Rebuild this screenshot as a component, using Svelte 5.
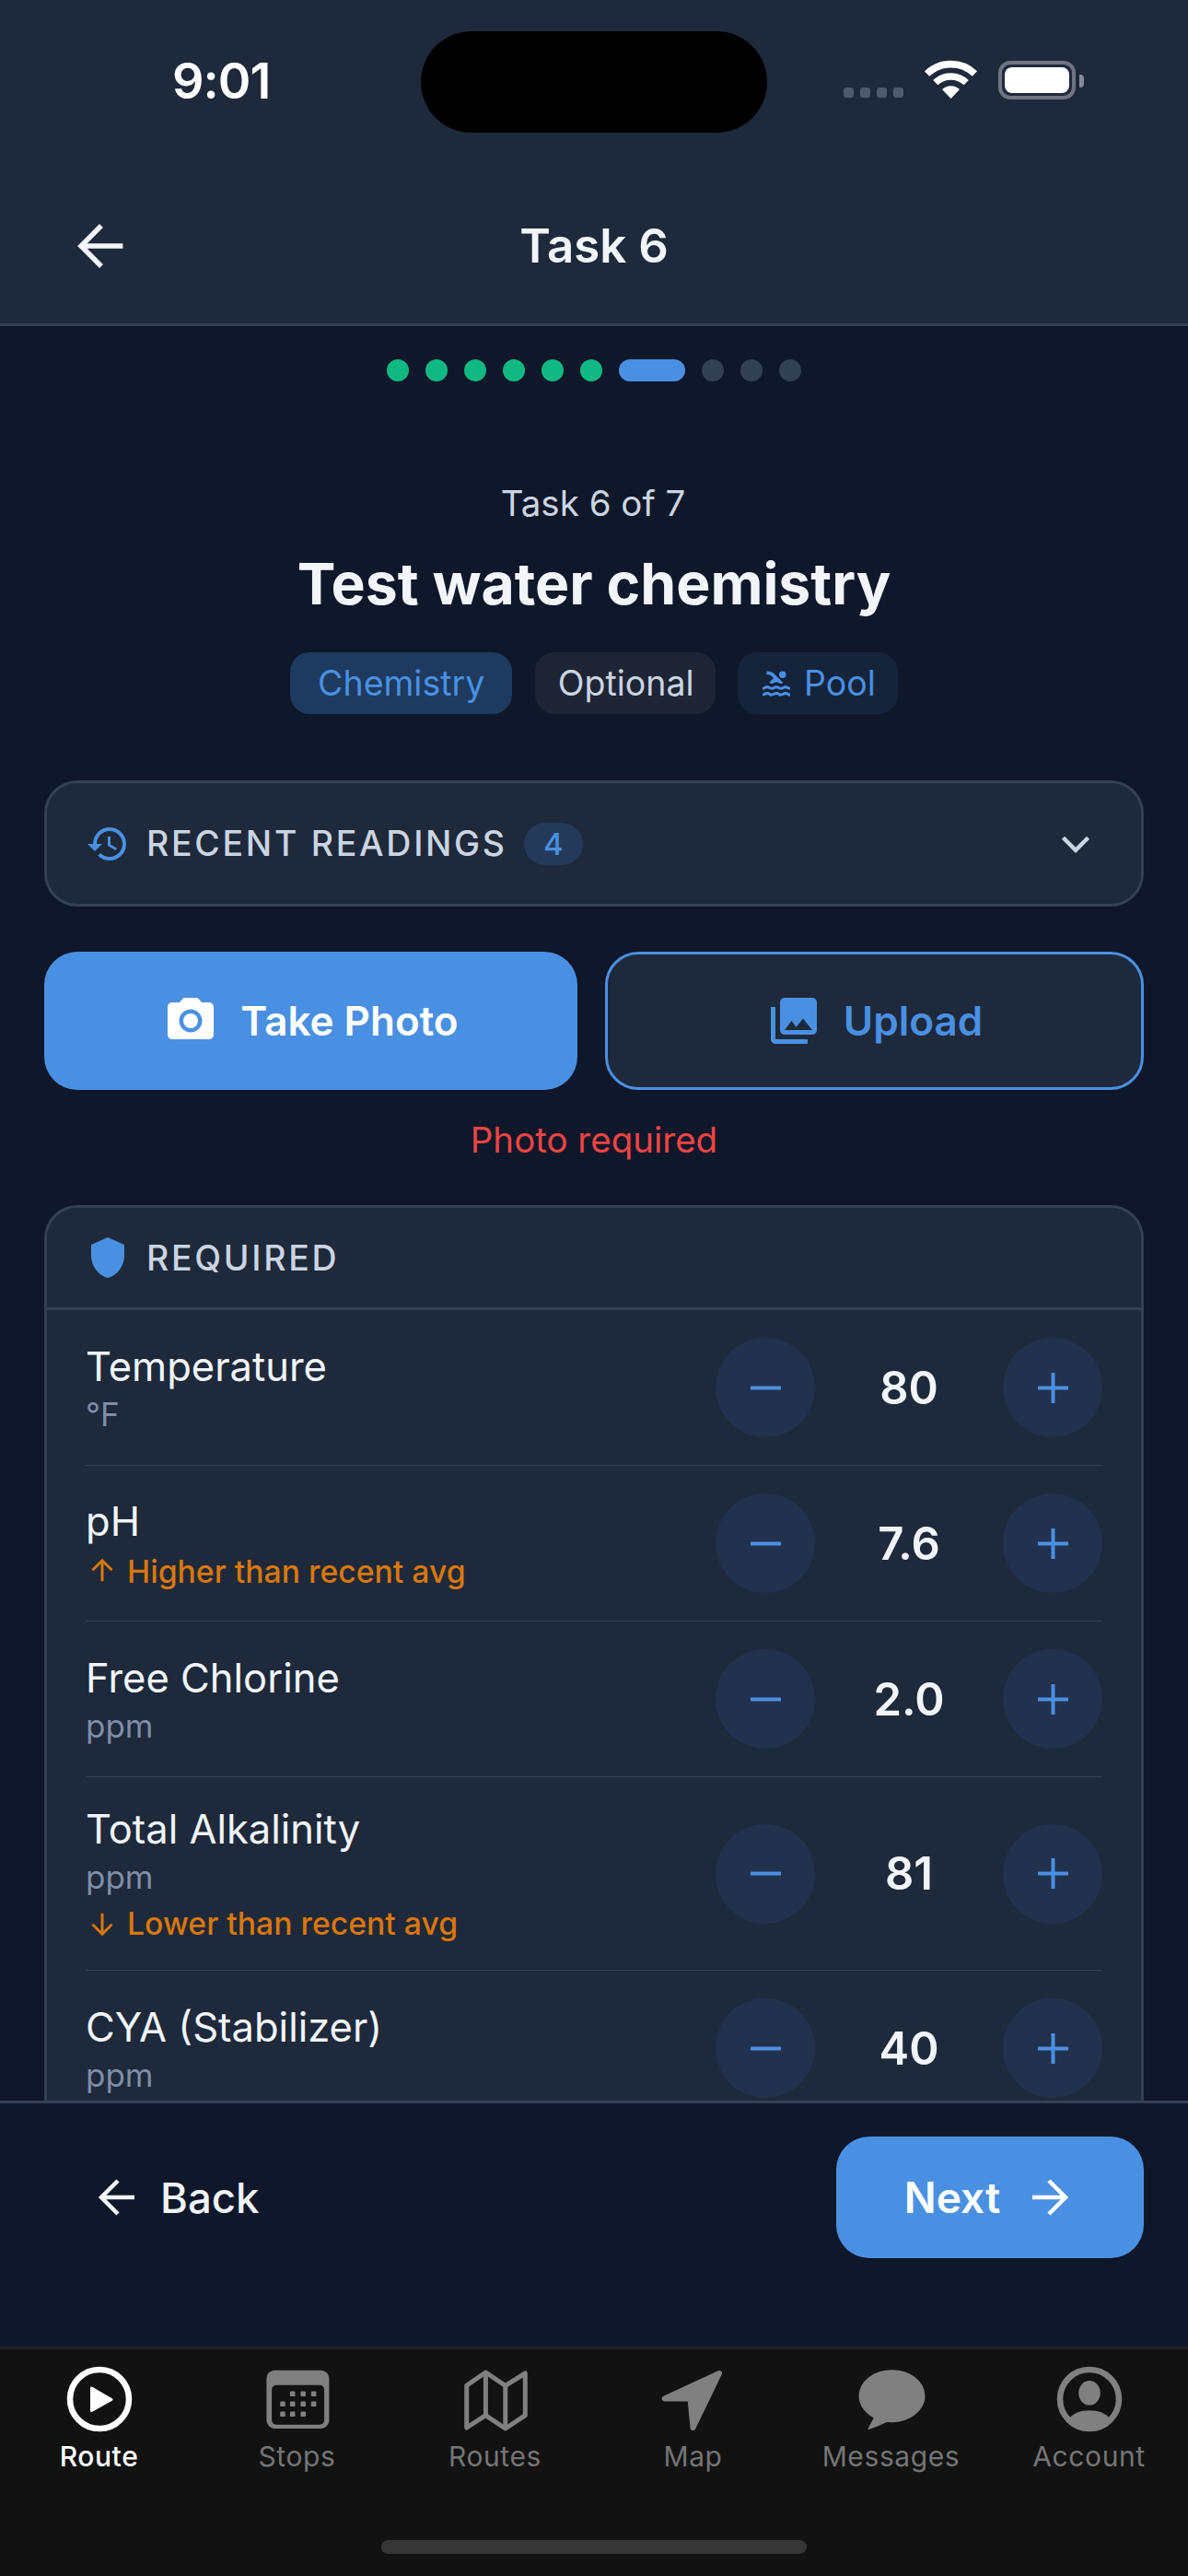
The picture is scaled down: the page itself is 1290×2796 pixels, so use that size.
<script>
  const dots = ['done','done','done','done','done','done','active','todo','todo','todo'];
  const rows = [
    { label: 'Temperature', unit: '°F', value: '80' },
    { label: 'pH', warn: 'up', value: '7.6' },
    { label: 'Free Chlorine', unit: 'ppm', value: '2.0' },
    { label: 'Total Alkalinity', unit: 'ppm', warn: 'down', value: '81' },
    { label: 'CYA (Stabilizer)', unit: 'ppm', value: '40' }
  ];
  const tabs = ['Route','Stops','Routes','Map','Messages','Account'];
  const stopDots = [[34.7,32.3],[46.2,32.3],[57.6,32.3],[24,43.3],[34.7,43.3],[46.2,43.3],[57.6,43.3],[24,54.3],[34.7,54.3],[46.2,54.3]];
</script>

<div class="phone">
  <header class="top">
    <div class="status">
      <span class="time">9:01</span>
      <div class="island"></div>
      <div class="sys">
        <div class="signal"><i></i><i></i><i></i><i></i></div>
        <svg class="wifi" width="58" height="43" viewBox="0 0 58 43" fill="none">
          <path d="M2.6 15.1A37.3 37.3 0 0 1 54.4 15.1" stroke="#fff" stroke-width="7.6"/>
          <path d="M11.8 24.7A24 24 0 0 1 45.2 24.7" stroke="#fff" stroke-width="7.4"/>
          <path d="M28.5 42L19 32.1A13.7 13.7 0 0 1 38 32.1Z" fill="#fff"/>
        </svg>
        <div class="battery"><div class="cell"></div><div class="nub"></div></div>
      </div>
    </div>
    <div class="nav">
      <svg class="navback" width="66" height="66" viewBox="0 0 24 24" fill="none" stroke="#f1f5f9" stroke-width="2"><path d="M20.5 12H4M12 4l-8 8 8 8"/></svg>
      <h1 class="navtitle">Task 6</h1>
    </div>
  </header>

  <main class="scroll">
    <div class="progress">
      {#each dots as d}<span class="dot {d}"></span>{/each}
    </div>

    <p class="count">Task 6 of 7</p>
    <h2 class="title">Test water chemistry</h2>
    <div class="chips">
      <span class="chip c-blue">Chemistry</span>
      <span class="chip c-grey">Optional</span>
      <span class="chip c-pool">
        <svg width="36" height="36" viewBox="0 0 24 24" fill="#4a90e2"><path d="M22 21c-1.11 0-1.73-.37-2.18-.64-.37-.22-.6-.36-1.15-.36-.56 0-.78.13-1.15.36-.46.27-1.07.64-2.18.64s-1.73-.37-2.18-.64c-.37-.22-.6-.36-1.15-.36-.56 0-.78.13-1.15.36-.46.27-1.08.64-2.19.64-1.11 0-1.73-.37-2.18-.64-.37-.23-.6-.36-1.15-.36s-.78.13-1.15.36c-.46.27-1.08.64-2.19.64v-2c.56 0 .78-.13 1.15-.36.46-.27 1.08-.64 2.19-.64s1.73.37 2.18.64c.37.23.59.36 1.15.36.56 0 .78-.13 1.15-.36.46-.27 1.08-.64 2.19-.64 1.11 0 1.73.37 2.18.64.37.22.6.36 1.15.36s.78-.13 1.15-.36c.45-.27 1.07-.64 2.18-.64s1.73.37 2.18.64c.37.23.59.36 1.15.36v2zm0-4.5c-1.11 0-1.73-.37-2.18-.64-.37-.22-.6-.36-1.15-.36-.56 0-.78.13-1.15.36-.45.27-1.07.64-2.18.64s-1.73-.37-2.18-.64c-.37-.22-.6-.36-1.15-.36-.56 0-.78.13-1.15.36-.45.27-1.07.64-2.18.64s-1.73-.37-2.18-.64c-.37-.22-.6-.36-1.15-.36s-.78.13-1.15.36c-.47.27-1.09.64-2.2.64v-2c.56 0 .78-.13 1.15-.36.45-.27 1.07-.64 2.18-.64s1.73.37 2.18.64c.37.22.6.36 1.15.36.56 0 .78-.13 1.15-.36.45-.27 1.07-.64 2.18-.64s1.73.37 2.18.64c.37.22.6.36 1.15.36s.78-.13 1.15-.36c.45-.27 1.07-.64 2.18-.64s1.73.37 2.18.64c.37.22.6.36 1.15.36v2zM8.67 12c.56 0 .78-.13 1.15-.36.46-.27 1.08-.64 2.19-.64 1.11 0 1.73.37 2.18.64.37.22.6.36 1.15.36s.78-.13 1.15-.36c.12-.07.26-.15.41-.23L10.48 5C8.93 3.45 7.5 2.99 5 3v2.5c1.82-.01 2.89.39 4 1.5l1 1-3.25 3.25c.31.12.56.27.77.39.37.23.59.36 1.15.36z"/><circle cx="16.5" cy="5.5" r="2.5"/></svg>
        Pool
      </span>
    </div>

    <section class="recent">
      <svg width="48" height="48" viewBox="0 0 24 24" fill="#4a90e2"><path d="M13 3a9 9 0 0 0-9 9H1l3.89 3.89.07.14L9 12H6c0-3.87 3.13-7 7-7s7 3.13 7 7-3.13 7-7 7c-1.93 0-3.68-.79-4.94-2.06l-1.42 1.42A8.954 8.954 0 0 0 13 21a9 9 0 0 0 0-18zm-1 5v5l4.28 2.54.72-1.21-3.5-2.08V8H12z"/></svg>
      <span class="caps">RECENT READINGS</span>
      <span class="badge">4</span>
      <svg class="chev" width="54" height="54" viewBox="0 0 24 24" fill="none" stroke="#cbd5e1" stroke-width="2"><path d="M6 9l6 6 6-6"/></svg>
    </section>

    <div class="actions">
      <button class="act primary">
        <svg width="60" height="60" viewBox="0 0 24 24" fill="#fff"><path d="M9 2L7.17 4H4c-1.1 0-2 .9-2 2v12c0 1.1.9 2 2 2h16c1.1 0 2-.9 2-2V6c0-1.1-.9-2-2-2h-3.17L15 2H9zm3 15c-2.76 0-5-2.24-5-5s2.24-5 5-5 5 2.24 5 5-2.24 5-5 5z"/><circle cx="12" cy="12" r="3.2"/></svg>
        Take Photo
      </button>
      <button class="act outline">
        <svg width="60" height="60" viewBox="0 0 24 24" fill="#4a90e2"><path d="M22 16V4c0-1.1-.9-2-2-2H8c-1.1 0-2 .9-2 2v12c0 1.1.9 2 2 2h12c1.1 0 2-.9 2-2zm-11-4l2.03 2.71L16 11l4 5H8l3-4zM2 6v14c0 1.1.9 2 2 2h14v-2H4V6H2z"/></svg>
        Upload
      </button>
    </div>
    <p class="err">Photo required</p>

    <section class="card">
      <div class="cardhead">
        <svg width="48" height="48" viewBox="0 0 24 24" fill="#4a90e2"><path d="M12 1L3 5v6c0 5.55 3.84 10.74 9 12 5.16-1.26 9-6.45 9-12V5l-9-4z"/></svg>
        <span class="caps">REQUIRED</span>
      </div>
      <div class="rows">
        {#each rows as r}
          <div class="row">
            <div class="info">
              <div class="label">{r.label}</div>
              {#if r.unit}<div class="unit">{r.unit}</div>{/if}
              {#if r.warn === 'up'}
                <div class="warn">
                  <svg width="36" height="36" viewBox="0 0 24 24" fill="none" stroke="#d97706" stroke-width="2"><path d="M12 19.5V4.5M5 11.5l7-7 7 7"/></svg>
                  Higher than recent avg
                </div>
              {:else if r.warn === 'down'}
                <div class="warn">
                  <svg width="36" height="36" viewBox="0 0 24 24" fill="none" stroke="#d97706" stroke-width="2"><path d="M12 4.5v15M5 12.5l7 7 7-7"/></svg>
                  Lower than recent avg
                </div>
              {/if}
            </div>
            <div class="stepper">
              <button class="round" aria-label="Decrease">
                <svg width="33" height="33" viewBox="0 0 33 33" stroke="#4a90e2" stroke-width="4"><path d="M0 16.5H33"/></svg>
              </button>
              <span class="value">{r.value}</span>
              <button class="round" aria-label="Increase">
                <svg width="33" height="33" viewBox="0 0 33 33" stroke="#4a90e2" stroke-width="4"><path d="M0 16.5H33M16.5 0V33"/></svg>
              </button>
            </div>
          </div>
        {/each}
      </div>
    </section>
  </main>

  <footer class="foot">
    <button class="back">
      <svg width="54" height="54" viewBox="0 0 24 24" fill="none" stroke="#f1f5f9" stroke-width="2"><path d="M20 12H4M12 4l-8 8 8 8"/></svg>
      Back
    </button>
    <button class="next">
      Next
      <svg width="54" height="54" viewBox="0 0 24 24" fill="none" stroke="#fff" stroke-width="2"><path d="M4 12h16M12 4l8 8-8 8"/></svg>
    </button>
  </footer>

  <nav class="tabs">
    {#each tabs as t, i}
      <div class="tab" class:on={i === 0}>
        <svg width="80" height="76" viewBox="0 0 80 76">
          {#if i === 0}
            <circle cx="40" cy="38" r="32" fill="none" stroke="#fff" stroke-width="6.5"/>
            <path d="M31.5 26V50.5L53 38.5Z" fill="#fff" stroke="#fff" stroke-width="3" stroke-linejoin="round"/>
          {:else if i === 1}
            <rect x="6.4" y="6.7" width="68" height="63.3" rx="9" fill="#808080"/>
            <rect x="12.1" y="22.7" width="57" height="43" rx="5" fill="#121212"/>
            {#each stopDots as p}
              <rect x={p[0]-2.8} y={p[1]-2.8} width="5.6" height="5.6" rx="1.2" fill="#808080"/>
            {/each}
          {:else if i === 2}
            <path d="M8.7 23.3L29.4 9L50.8 23.3L72.3 10V55.7L50.8 70L29.4 55.7L8.7 69Z" fill="none" stroke="#808080" stroke-width="5" stroke-linejoin="round"/>
            <path d="M29.4 9V55.7M50.8 23.3V70" fill="none" stroke="#808080" stroke-width="5"/>
          {:else if i === 3}
            <path d="M68 10L8.7 37.5H36.5L39.5 69Z" fill="#808080" stroke="#808080" stroke-width="6" stroke-linejoin="round"/>
          {:else if i === 4}
            <ellipse cx="40.5" cy="34.7" rx="36" ry="28.5" fill="#808080"/>
            <path d="M21.5 57L14.5 70Q15 71.5 17 70.5Q27 67 37 62Z" fill="#808080"/>
          {:else}
            <circle cx="40" cy="38" r="32" fill="none" stroke="#808080" stroke-width="6.5"/>
            <ellipse cx="40" cy="31.3" rx="11.8" ry="13.3" fill="#808080"/>
            <path d="M17.5 59.5C26 47 54 47 62.5 59.5A32 32 0 0 1 17.5 59.5Z" fill="#808080"/>
          {/if}
        </svg>
        <span>{t}</span>
      </div>
    {/each}
    <div class="home"></div>
  </nav>
</div>

<style>
  :global(body) { margin: 0; background: #0f172a; }
  * { box-sizing: border-box; }
  .phone {
    width: 1290px; height: 2796px; display: flex; flex-direction: column; overflow: hidden;
    background: #0f172a; color: #f1f5f9; font-family: Inter, "Liberation Sans", sans-serif;
  }
  button { font-family: inherit; border: 0; padding: 0; cursor: pointer; }
  p, h1, h2 { margin: 0; }

  .top { flex: none; height: 354px; background: #1e293b; border-bottom: 3px solid #334155; }
  .status { position: relative; height: 183px; display: flex; align-items: flex-start; padding: 65px 113px 0 187px; }
  .time { font-size: 54px; font-weight: 600; color: #fff; line-height: 46px; letter-spacing: -1px; }
  .island { position: absolute; left: 457px; top: 34px; width: 376px; height: 110px; border-radius: 55px; background: #000; }
  .sys { margin-left: auto; display: flex; align-items: flex-end; height: 43px; }
  .signal { display: flex; gap: 7px; margin-bottom: 2px; }
  .signal i { width: 11px; height: 11px; border-radius: 3px; background: #4f5b6c; }
  .wifi { margin-left: 23px; display: block; }
  .battery { position: relative; width: 84px; height: 42px; margin: 0 9px 0 22px; border: 4px solid #6d7580; border-radius: 13px; padding: 3px; }
  .cell { width: 100%; height: 100%; background: #fff; border-radius: 8px; }
  .nub { position: absolute; right: -13px; top: 11px; width: 5px; height: 14px; background: #858c96; border-radius: 0 4px 4px 0; }

  .nav { position: relative; height: 168px; display: flex; align-items: center; justify-content: center; }
  .navback { position: absolute; left: 77px; top: 51px; }
  .navtitle { font-size: 51px; font-weight: 600; line-height: 66px; color: #f1f5f9; }

  .scroll { flex: 1; min-height: 0; overflow: hidden; padding: 36px 48px 0; }
  .progress { display: flex; justify-content: center; gap: 18px; }
  .dot { width: 24px; height: 24px; border-radius: 12px; background: #334155; }
  .dot.done { background: #10b981; }
  .dot.active { width: 72px; background: #4a90e2; }

  .count { margin-top: 109px; text-align: center; font-size: 38.5px; line-height: 47px; color: #cbd5e1; padding-right: 2px; }
  .title { margin-top: 25px; text-align: center; font-size: 62.5px; font-weight: 700; line-height: 76px; color: #f1f5f9; }
  .chips { margin-top: 37px; display: flex; justify-content: center; gap: 24.5px; }
  .chip { height: 67px; padding: 0 30px; border-radius: 21px; display: flex; align-items: center; gap: 12px; font-size: 37.5px; }
  .c-blue { background: #1e3a5f; color: #4a90e2; }
  .c-grey { background: #1e2535; color: #cbd5e1; padding: 0 23px 0 25px; }
  .c-pool { background: #15233b; color: #4a90e2; padding: 0 24px; }

  .recent {
    margin-top: 72px; height: 137px; display: flex; align-items: center; padding: 0 44.5px 0 42px;
    background: #1e293b; border: 3px solid #334155; border-radius: 36px;
  }
  .caps { margin-left: 18px; font-size: 37.5px; font-weight: 550; letter-spacing: 2.7px; color: #cbd5e1; }
  .badge { margin-left: 18px; width: 64px; height: 46px; border-radius: 23px; background: #253a5a; color: #4a90e2; font-size: 33px; font-weight: 500; display: flex; align-items: center; justify-content: center; }
  .chev { margin-left: auto; }

  .actions { margin-top: 49px; display: flex; gap: 30px; }
  .act { flex: 1; height: 150px; border-radius: 36px; display: flex; align-items: center; justify-content: center; gap: 24px; font-size: 44px; font-weight: 600; }
  .primary { background: #4a90e2; color: #fff; }
  .outline { background: #1e293b; color: #4a90e2; border: 3px solid #4a90e2; }
  .err { margin-top: 31px; text-align: center; font-size: 38.5px; line-height: 47px; color: #ef4444; }

  .card { margin-top: 47px; background: #1e293b; border: 3px solid #334155; border-radius: 36px; }
  .cardhead { height: 111px; display: flex; align-items: center; padding-left: 42px; border-bottom: 3px solid #334155; }
  .rows { padding: 0 42px; }
  .row { display: flex; align-items: center; justify-content: space-between; padding: 30px 0; border-bottom: 1px solid #334155; }
  .label { font-size: 43.5px; color: #f1f5f9; }
  .unit { margin-top: 5px; font-size: 35px; color: #7f8ea6; }
  .warn { margin-top: 8px; display: flex; align-items: center; gap: 9px; font-size: 33.75px; font-weight: 500; color: #d97706; }
  .unit + .warn { margin-top: 9px; }
  .stepper { flex: none; display: flex; align-items: center; }
  .round { width: 108px; height: 108px; border-radius: 50%; background: #22314d; display: flex; align-items: center; justify-content: center; }
  .value { width: 204px; text-align: center; font-size: 49px; font-weight: 600; color: #f1f5f9; }

  .foot { flex: none; height: 267px; background: #0f172a; border-top: 3px solid #334155; display: flex; align-items: flex-start; justify-content: space-between; padding: 36px 48px 0 101px; }
  .back, .next { display: flex; align-items: center; height: 132px; font-size: 45.5px; font-weight: 500; background: none; color: #f1f5f9; gap: 19px; }
  .next { background: #4a90e2; color: #fff; border-radius: 36px; width: 334px; justify-content: center; font-size: 46px; font-weight: 600; gap: 26px; padding-right: 2px; }

  .tabs { position: relative; flex: none; height: 249px; background: #121212; border-top: 3px solid #1f2226; display: flex; align-items: flex-start; padding-top: 16px; }
  .tab { flex: 1; display: flex; flex-direction: column; align-items: center; color: #757575; font-size: 30px; line-height: 38px; letter-spacing: 0.6px; }
  .tab svg { display: block; margin-bottom: 5px; }
  .tab.on { color: #fff; font-weight: 500; }
  .home { position: absolute; left: 414px; top: 207px; width: 462px; height: 15px; border-radius: 8px; background: #363636; }
</style>
